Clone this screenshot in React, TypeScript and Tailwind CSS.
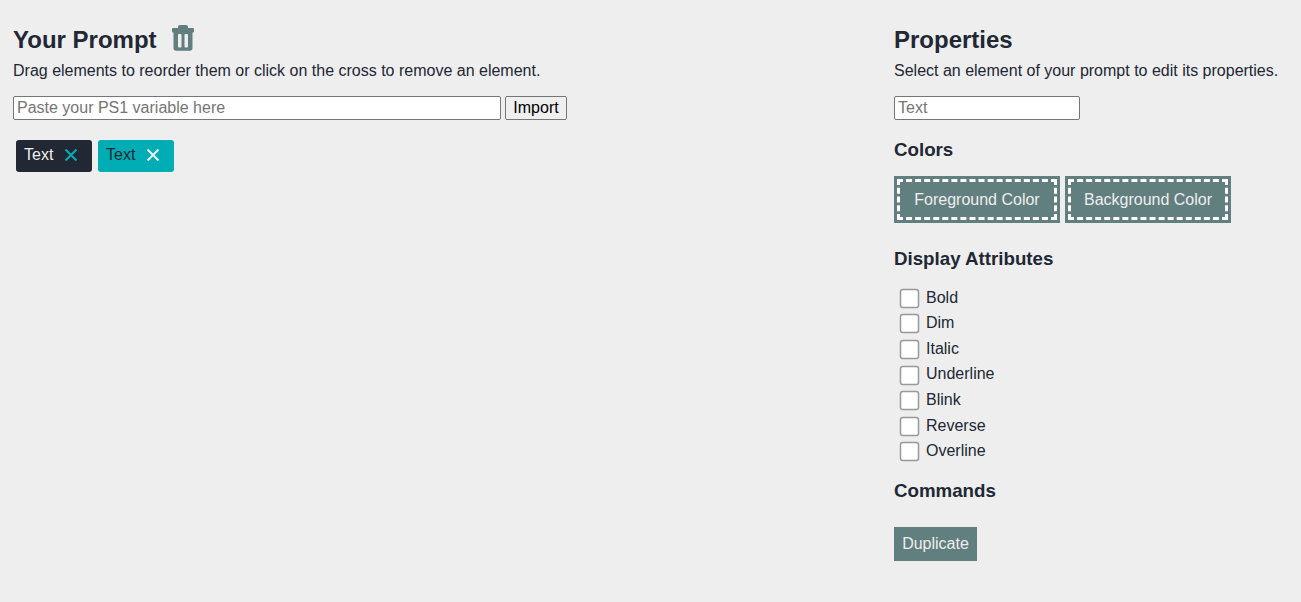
import React from "react";

function Trash() {
  return (
    <svg width="22" height="26" viewBox="0 0 22 26" className="block">
      <path fill="#627f7f" fillRule="evenodd" d="M8 0h6a2 2 0 0 1 2 2v1h5a1 1 0 0 1 1 1v2.500a1 1 0 0 1-1 1h-.5V23a2.700 2.700 0 0 1-2.700 2.700H4.200A2.700 2.700 0 0 1 1.500 23V7.500H1a1 1 0 0 1-1-1V4a1 1 0 0 1 1-1h5V2a2 2 0 0 1 2-2ZM6 10v11.500a1 1 0 0 0 1 1h1.500a1 1 0 0 0 1-1V10a1 1 0 0 0-1-1H7a1 1 0 0 0-1 1ZM12.500 10v11.500a1 1 0 0 0 1 1H15a1 1 0 0 0 1-1V10a1 1 0 0 0-1-1h-1.500a1 1 0 0 0-1 1Z" />
    </svg>
  );
}

function Cross({ color }: { color: string }) {
  return (
    <svg width="14" height="14" viewBox="0 0 14 14" className="block">
      <path d="M1.500 1.500 12.500 12.500M12.500 1.500 1.500 12.500" stroke={color} strokeWidth="2" fill="none" />
    </svg>
  );
}

function Chip({ dark }: { dark?: boolean }) {
  return (
    <div className={`flex h-8 w-[76px] items-start rounded-[3px] pl-[8px] pt-[2px] ${dark ? "bg-[#212733] text-[#eeeeee]" : "bg-[#00adb5] text-[#212733]"}`}>
      <span className="leading-[25.6px]">Text</span>
      <span className="ml-[11px] mt-[6px]">
        <Cross color={dark ? "#00adb5" : "#eeeeee"} />
      </span>
    </div>
  );
}

function ColorButton({ label }: { label: string }) {
  return (
    <button className="m-[3px] h-[41px] w-[160px] border-[3px] border-dashed border-white bg-[#627f7f] pt-[1px] text-[#eeeeee] shadow-[0_0_0_3px_#627f7f]">
      {label}
    </button>
  );
}

const attrs = ["Bold", "Dim", "Italic", "Underline", "Blink", "Reverse", "Overline"];

export default function App() {
  return (
    <div className="flex h-[602px] w-[1301px] justify-between bg-[#eeeeee] pl-[13px] text-[16px] leading-[25.6px] text-[#212733] [font-family:'Liberation_Sans',Arial,sans-serif]">
      <div className="flex w-[600px] flex-col">
        <div className="mt-[25px] flex h-[29px] items-center">
          <h2 className="text-[24px] leading-[29px] font-bold">Your Prompt</h2>
          <span className="-mt-[3px] ml-[15px]"><Trash /></span>
        </div>
        <p className="mt-[4px]">Drag elements to reorder them or click on the cross to remove an element.</p>
        <div className="mt-[12px] flex gap-1">
          <input placeholder="Paste your PS1 variable here" className="h-6 w-[488px] rounded-[2px] border border-[#767676] bg-white px-[3px] text-[16px] leading-[18px] placeholder:text-[#757575]" />
          <button className="h-6 w-[62px] rounded-[2px] border border-[#767676] bg-[#efefef] text-[16px] leading-[18px] text-black">Import</button>
        </div>
        <div className="mt-5 flex gap-[6px] pl-[3px]">
          <Chip dark />
          <Chip />
        </div>
      </div>
      <div className="flex w-[407px] flex-col">
        <h2 className="mt-[25px] text-[24px] leading-[29px] font-bold">Properties</h2>
        <p className="mt-[4px]">Select an element of your prompt to edit its properties.</p>
        <input placeholder="Text" className="mt-[12px] h-6 w-[186px] rounded-[2px] border border-[#767676] bg-white px-[3px] text-[16px] leading-[18px] placeholder:text-[#757575]" />
        <h3 className="mt-[19px] text-[18.72px] leading-[22px] font-bold">Colors</h3>
        <div className="mt-[15px] flex gap-[5px]">
          <ColorButton label="Foreground Color" />
          <ColorButton label="Background Color" />
        </div>
        <h3 className="mt-[25px] text-[18.72px] leading-[22px] font-bold">Display Attributes</h3>
        <div className="mt-[15px] flex flex-col pl-[9px]">
          {attrs.map((a) => (
            <label key={a} className="flex h-[25.6px] items-start">
              <input type="checkbox" className="m-0 mt-[7.200px] h-[13px] w-[13px] scale-150 appearance-none rounded-[2px] border border-[#999999] bg-white" />
              <span className="ml-[10px] leading-[25.6px]">{a}</span>
            </label>
          ))}
        </div>
        <h3 className="mt-[16px] text-[18.72px] leading-[22px] font-bold">Commands</h3>
        <button className="mt-[25px] h-[34px] w-[83px] bg-[#627f7f] text-[#eeeeee]">Duplicate</button>
      </div>
    </div>
  );
}
